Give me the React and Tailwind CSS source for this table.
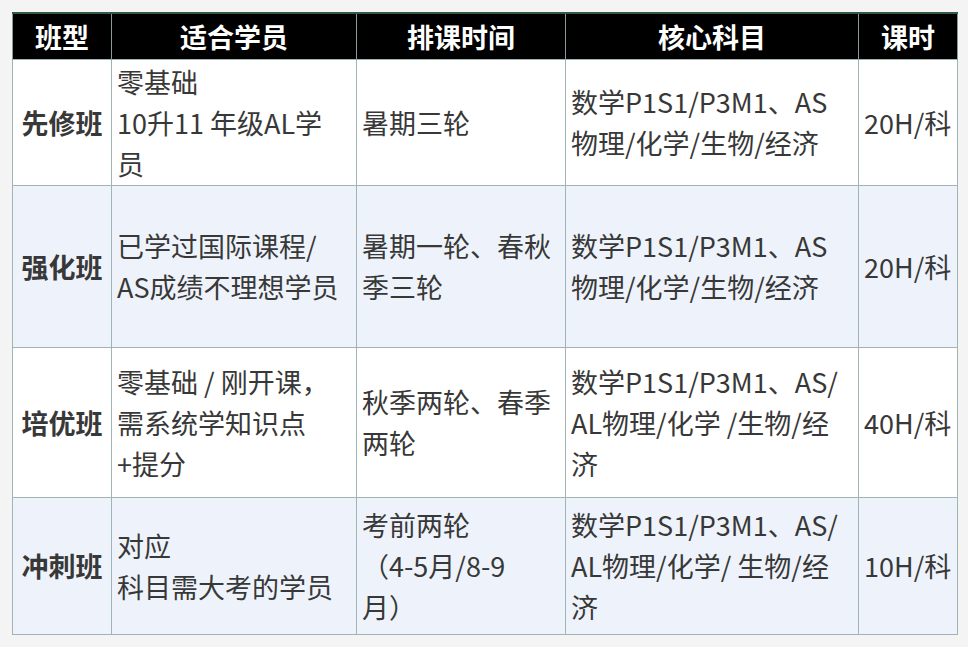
import React from 'react';

const rows = [
  {
    name: '先修班',
    who: ['零基础', '10升11 年级AL学', '员'],
    when: ['暑期三轮'],
    subj: ['数学P1S1/P3M1、AS', '物理/化学/生物/经济'],
    hours: '20H/科',
    h: 'h-[126px]',
    bg: 'bg-white',
  },
  {
    name: '强化班',
    who: ['已学过国际课程/', 'AS成绩不理想学员'],
    when: ['暑期一轮、春秋', '季三轮'],
    subj: ['数学P1S1/P3M1、AS', '物理/化学/生物/经济'],
    hours: '20H/科',
    h: 'h-[162px]',
    bg: 'bg-[#eef3fb]',
  },
  {
    name: '培优班',
    who: ['零基础 / 刚开课，', '需系统学知识点', '+提分'],
    when: ['秋季两轮、春季', '两轮'],
    subj: ['数学P1S1/P3M1、AS/', 'AL物理/化学 /生物/经', '济'],
    hours: '40H/科',
    h: 'h-[150px]',
    bg: 'bg-white',
  },
  {
    name: '冲刺班',
    who: ['对应', '科目需大考的学员'],
    when: ['考前两轮', '（4-5月/8-9', '月）'],
    subj: ['数学P1S1/P3M1、AS/', 'AL物理/化学/ 生物/经', '济'],
    hours: '10H/科',
    h: 'h-[137px]',
    bg: 'bg-[#eef3fb]',
  },
];

function Lines({ items }) {
  return items.map((t, i) => (
    <div key={i} className="whitespace-nowrap">{t}</div>
  ));
}

export default function App() {
  const cell = 'border border-[#9fb4b4] px-[5px] align-middle';
  return (
    <div className="min-h-[647px] w-[968px] bg-[#f4f4f4] pl-[12px] pt-[12px] font-['Noto_Sans_CJK_SC','Noto_Sans',sans-serif] text-[27px] leading-[41px] text-[#383838]">
      <table className="w-[945px] table-fixed border-collapse">
        <colgroup>
          <col className="w-[99px]" />
          <col className="w-[245px]" />
          <col className="w-[209px]" />
          <col className="w-[293px]" />
          <col className="w-[99px]" />
        </colgroup>
        <thead>
          <tr className="h-[46px] bg-black text-white">
            {['班型', '适合学员', '排课时间', '核心科目', '课时'].map((t) => (
              <th
                key={t}
                className="border-x border-t-2 border-x-[#8a9a9a] border-t-[#2f5a45] text-center font-bold"
              >
                {t}
              </th>
            ))}
          </tr>
        </thead>
        <tbody>
          {rows.map((r) => (
            <tr key={r.name} className={`${r.h} ${r.bg}`}>
              <td className={`${cell} text-center font-bold`}>{r.name}</td>
              <td className={cell}><Lines items={r.who} /></td>
              <td className={cell}><Lines items={r.when} /></td>
              <td className={cell}><Lines items={r.subj} /></td>
              <td className={`${cell} px-[3px]`}>{r.hours}</td>
            </tr>
          ))}
        </tbody>
      </table>
    </div>
  );
}
